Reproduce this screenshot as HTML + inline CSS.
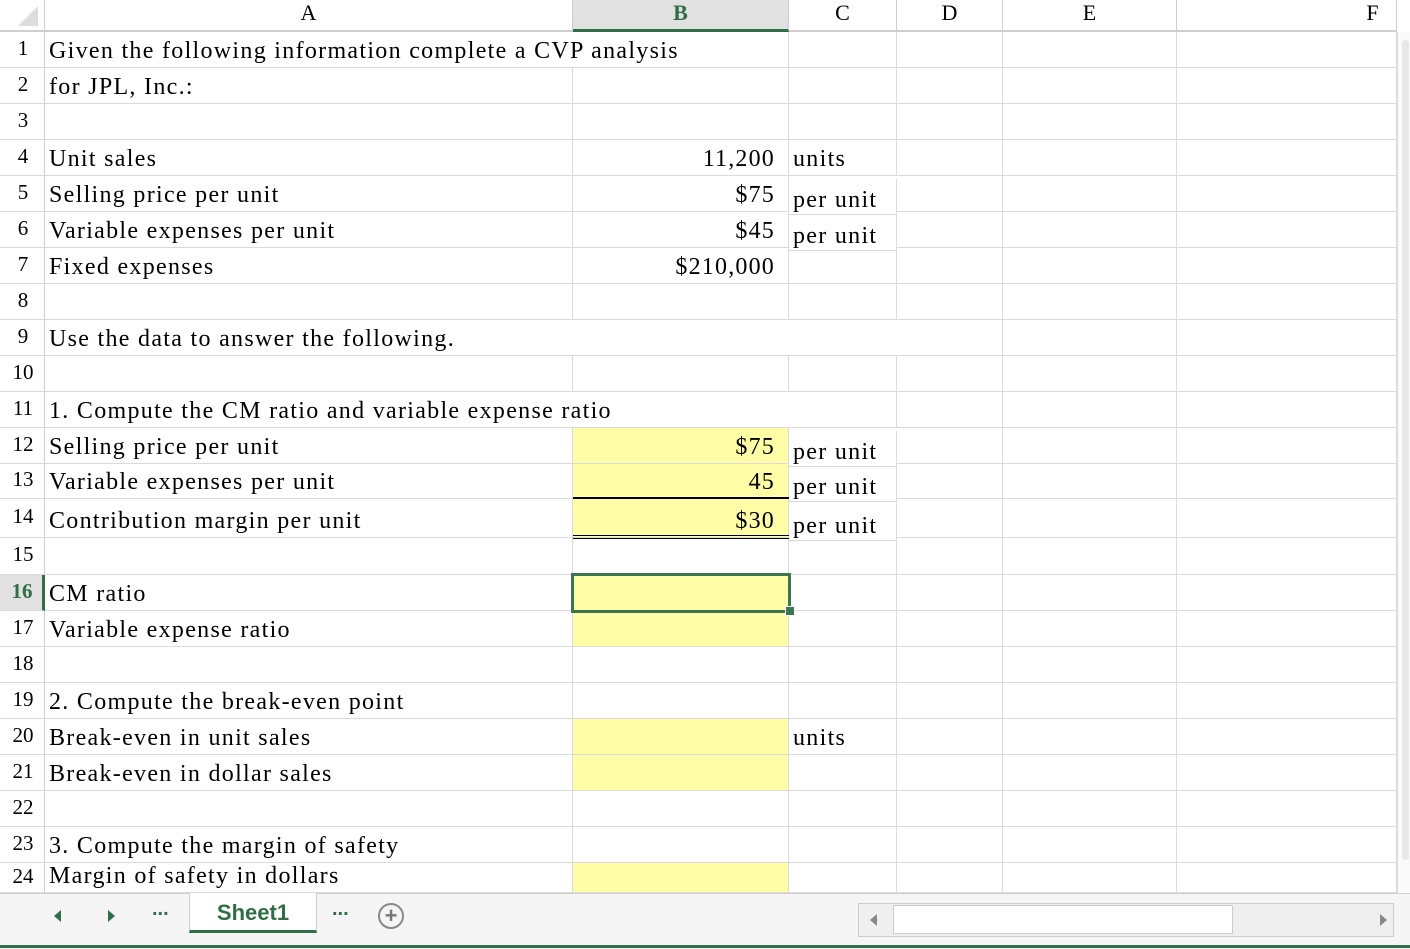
<!DOCTYPE html>
<html><head><style>
body{margin:0;width:1410px;height:948px;overflow:hidden;background:#fff;font-family:"Liberation Serif",serif;position:relative}
.c{position:absolute;box-sizing:border-box;border-right:1px solid #dadada;border-bottom:1px solid #dadada;font-size:24px;letter-spacing:1.3px;color:#000;white-space:nowrap;overflow:visible;padding:0 4px;display:flex;align-items:flex-end;padding-bottom:2px}
.r{justify-content:flex-end;padding-right:13px;letter-spacing:1.2px}
.y{background:#fffda6}
.h{position:absolute;box-sizing:border-box;border-right:1px solid #cfcfcf;border-bottom:2px solid #cfcfcf;font-size:22px;text-align:center;top:0;height:32px;line-height:26px;background:#fff}
.n{position:absolute;left:0;width:45px;box-sizing:border-box;border-right:1px solid #cfcfcf;border-bottom:1px solid #dadada;font-size:21px;text-align:center;padding-left:2px}
</style></head><body>
<div id="g"></div>
<div style="position:absolute;left:0;top:893px;width:1410px;height:55px;background:#f5f5f5;border-top:1px solid #cfcfcf"></div>
<div style="position:absolute;left:0;top:945px;width:1410px;height:3px;background:#2f6e46"></div>
<div style="position:absolute;left:54px;top:910px;width:0;height:0;border-top:6px solid transparent;border-bottom:6px solid transparent;border-right:7px solid #2f6e46"></div>
<div style="position:absolute;left:108px;top:910px;width:0;height:0;border-top:6px solid transparent;border-bottom:6px solid transparent;border-left:7px solid #2f6e46"></div>
<div style="position:absolute;left:152px;top:898px;font:bold 20px 'Liberation Sans',sans-serif;color:#2f6e46">...</div>
<div style="position:absolute;left:189px;top:893px;width:128px;height:40px;background:#fff;border-left:1px solid #ccc;border-right:1px solid #ccc;border-bottom:3px solid #2f6e46;box-sizing:border-box;text-align:center;font:bold 22px 'Liberation Sans',sans-serif;color:#2f6e46;line-height:40px">Sheet1</div>
<div style="position:absolute;left:332px;top:898px;font:bold 20px 'Liberation Sans',sans-serif;color:#2f6e46">...</div>
<div style="position:absolute;left:378px;top:903px;width:26px;height:26px;border:2px solid #888;border-radius:50%;box-sizing:border-box;text-align:center;font:bold 22px/22px 'Liberation Sans',sans-serif;color:#777">+</div>
<div style="position:absolute;left:858px;top:903px;width:536px;height:34px;border:1px solid #ccc;background:#efefef;box-sizing:border-box"></div>
<div style="position:absolute;left:893px;top:905px;width:340px;height:29px;border:1px solid #ccc;background:#fff;box-sizing:border-box"></div>
<div style="position:absolute;left:870px;top:914px;border-top:6px solid transparent;border-bottom:6px solid transparent;border-right:7px solid #888"></div>
<div style="position:absolute;left:1380px;top:914px;border-top:6px solid transparent;border-bottom:6px solid transparent;border-left:7px solid #888"></div>
<div style="position:absolute;left:1397px;top:32px;width:13px;height:861px;background:#fafafa;border-left:1px solid #ddd"></div>
<div style="position:absolute;left:1402px;top:40px;width:7px;height:820px;background:#e8e8e8;border-radius:4px"></div>
<script>
var g=document.getElementById('g'),H='';
var cols=[45,573,789,897,1003,1177,1397];
var names=['A','B','C','D','E','F'];
H+='<div class="h" style="left:0;width:45px"></div><div style="position:absolute;left:18px;top:6px;border-left:20px solid transparent;border-bottom:20px solid #ddd"></div>';
for(var i=0;i<6;i++){var b=i==1;H+='<div class="h" style="left:'+cols[i]+'px;width:'+(cols[i+1]-cols[i])+'px;'+(b?'background:#e1e1e1;border-bottom:3px solid #2f6e46;color:#2f6e46;font-weight:bold':'')+(i==5?'padding-left:172px;':'')+'">'+names[i]+'</div>';}
var rows=[32,68,104,140,176,212,248,284,320,356,392,428,464,499,538,575,611,647,683,719,755,791,827,863,899];
var d={1:[['Given the following information complete a CVP analysis',2]],2:[['for JPL, Inc.:']],4:[['Unit sales'],['11,200',1,'r'],['units']],5:[['Selling price per unit'],['$75',1,'r'],['per unit','',1]],6:[['Variable expenses per unit'],['$45',1,'r'],['per unit','',1]],7:[['Fixed expenses'],['$210,000',1,'r']],9:[['Use the data to answer the following.',4]],11:[['1. Compute the CM ratio and variable expense ratio',3]],12:[['Selling price per unit'],['$75',1,'r y'],['per unit','',1]],13:[['Variable expenses per unit'],['45',1,'r y'],['per unit','',1]],14:[['Contribution margin per unit'],['$30',1,'r y'],['per unit','',1]],16:[['CM ratio'],['',1,'y']],17:[['Variable expense ratio'],['',1,'y']],19:[['2. Compute the break-even point']],20:[['Break-even in unit sales'],['',1,'y'],['units']],21:[['Break-even in dollar sales'],['',1,'y']],23:[['3. Compute the margin of safety']],24:[['Margin of safety in dollars'],['',1,'y']]};
for(var r=1;r<=24;r++){var t=rows[r-1],h=Math.min(rows[r],893)-t;
H+='<div class="n" style="top:'+t+'px;height:'+h+'px;line-height:'+(h-4)+'px;'+(r==16?'color:#2f6e46;font-weight:bold;border-right:3px solid #2f6e46;background:#e1e1e1':'')+'">'+r+'</div>';
var cells=d[r]||[],ci=0,k=0;
while(ci<6){var cell=cells[k]||['',1],span=cell[1]||1;if(typeof span!='number')span=1;k++;
var cls=cell[2]&&typeof cell[2]=='string'?cell[2]:'';var w=cols[ci+span]-cols[ci];
var st='';if(cell[2]===1)st='padding-bottom:0;align-items:flex-end;transform:translateY(3px)';
H+='<div class="c '+cls+'" style="left:'+cols[ci]+'px;top:'+t+'px;width:'+w+'px;height:'+h+'px;'+st+'">'+cell[0]+'</div>';ci+=span;}
}
g.innerHTML=H;
</script>
<div style="position:absolute;left:573px;top:497px;width:216px;height:2px;background:#000"></div>
<div style="position:absolute;left:573px;top:535px;width:216px;height:1px;background:#000"></div>
<div style="position:absolute;left:573px;top:538px;width:216px;height:1px;background:#000"></div>
<div style="position:absolute;left:571px;top:573px;width:220px;height:40px;border:3px solid #3c7650;box-sizing:border-box"></div>
<div style="position:absolute;left:785px;top:606px;width:8px;height:8px;background:#3c7650;border:1px solid #fff"></div>
</body></html>
